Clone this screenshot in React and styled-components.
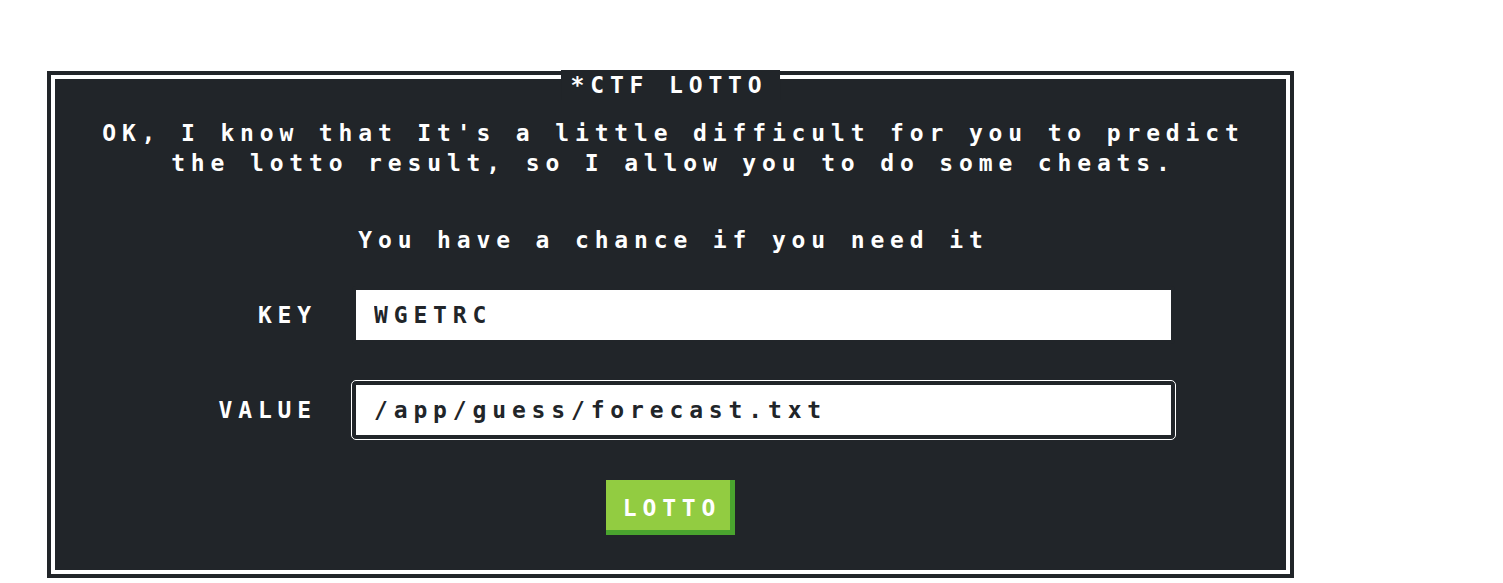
import React, { useEffect, useRef } from "react";
import styled, { createGlobalStyle } from "styled-components";

const GlobalStyle = createGlobalStyle`
    html, body {
        margin: 0;
        padding: 0;
        background: #fff;
    }
    body {
        font-family: "DejaVu Sans Mono", "Liberation Mono", monospace;
        font-weight: bold;
    }
`;

const Page = styled.div`
    padding: 71px 0 0 47px;
`;

const Frame = styled.section`
    position: relative;
    box-sizing: border-box;
    width: 1247px;
    height: 507px;
    background-color: #212529;
    border: 4px solid #212529;
    box-shadow: inset 0 0 0 4px #fff;
    color: #fff;
    font-size: 23px;
    line-height: 30px;
    letter-spacing: 5.85px;
`;

const Title = styled.h1`
    position: absolute;
    top: -5px;
    left: 50%;
    transform: translateX(-50%);
    margin: 0;
    padding: 0 13px 0 10px;
    height: 30px;
    background-color: #212529;
    font-size: 23px;
    line-height: 30px;
    font-weight: bold;
    white-space: nowrap;
`;

const Body = styled.div`
    padding-top: 43px;
    display: flex;
    flex-direction: column;
    align-items: center;
`;

const Text = styled.p`
    margin: 0 0 ${(p) => p.$gap || 0}px;
    padding-left: 5.85px;
    text-align: center;
    white-space: nowrap;
`;

const Form = styled.div`
    align-self: stretch;
    display: grid;
    grid-template-columns: 266px 823px;
    column-gap: 35px;
    row-gap: 37px;
    align-items: center;
    margin-top: 31px;
`;

const Label = styled.label`
    text-align: right;
    white-space: nowrap;
`;

const Input = styled.input`
    box-sizing: border-box;
    width: 823px;
    height: 58px;
    margin: 0;
    padding: 0 18px;
    border: 4px solid #212529;
    border-radius: 4px;
    background: #fff;
    color: #212529;
    caret-color: #212529;
    font-family: inherit;
    font-weight: bold;
    font-size: 23px;
    letter-spacing: 5.85px;
    outline: ${(p) => (p.$focused ? "1px solid #fff" : "none")};
    outline-offset: 0;
`;

const Actions = styled.div`
    margin-top: 41px;
    display: flex;
    justify-content: center;
`;

const Button = styled.button`
    box-sizing: border-box;
    height: 55px;
    padding: 0 14px 0 17px;
    border: none;
    border-radius: 0;
    background-color: #92cc41;
    box-shadow: inset -5px -5px #4aa52e;
    color: #fff;
    font-family: inherit;
    font-weight: bold;
    font-size: 23px;
    line-height: 30px;
    letter-spacing: 5.85px;
    cursor: pointer;
`;

export default function App() {
    const valueRef = useRef(null);

    useEffect(() => {
        const el = valueRef.current;
        if (el) {
            el.focus();
            el.setSelectionRange(el.value.length, el.value.length);
        }
    }, []);

    return (
        <>
            <GlobalStyle />
            <Page>
                <Frame>
                    <Title>*CTF LOTTO</Title>
                    <Body>
                        <Text $gap={47}>
                            OK, I know that It's a little difficult for you to predict
                            <br />
                            the lotto result, so I allow you to do some cheats.
                        </Text>
                        <Text>You have a chance if you need it</Text>
                        <Form>
                            <Label htmlFor="key">KEY</Label>
                            <Input id="key" defaultValue="WGETRC" />
                            <Label htmlFor="value">VALUE</Label>
                            <Input id="value" ref={valueRef} $focused defaultValue="/app/guess/forecast.txt" />
                        </Form>
                        <Actions>
                            <Button type="button">LOTTO</Button>
                        </Actions>
                    </Body>
                </Frame>
            </Page>
        </>
    );
}
